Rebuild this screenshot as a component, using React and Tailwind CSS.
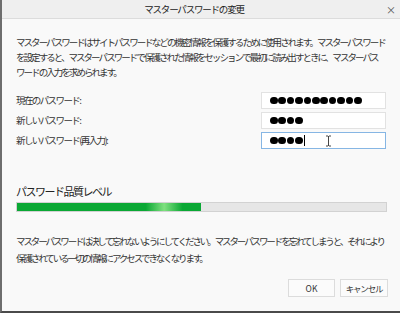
import React from "react";

const font = { fontFamily: '"Noto Sans CJK JP", "Noto Sans", sans-serif' };

function Dots({ n }) {
  return (
    <div className="flex items-center gap-[0.8px]">
      {Array.from({ length: n }).map((_, i) => (
        <div key={i} className="w-[7.6px] h-[7.6px] rounded-full bg-black" />
      ))}
    </div>
  );
}

export default function App() {
  return (
    <div
      className="w-[400px] h-[313px] bg-[#f9f9f9] flex flex-col border-l-2 border-b-2 border-l-[#6e6e6e] border-b-[#4a4a4a] text-[#333] overflow-hidden"
      style={font}
    >
      <div className="h-[19px] shrink-0 bg-[#efefef] border-b border-[#dcdcdc] flex items-center relative">
        <div className="flex-1 text-center text-[9.5px] tracking-[-1.2px] pr-[14px] text-[#222]">
          マスターパスワードの変更
        </div>
        <div className="absolute right-[4px] top-[2px] text-[10px] text-[#555]">×</div>
      </div>

      <div className="flex flex-col pl-[14px] pr-[12px]">
        <div className="mt-[16px] text-[9.5px] tracking-[-1.95px] leading-[15px] whitespace-nowrap">
          <div>マスターパスワードはサイトパスワードなどの機密情報を保護するために使用されます。マスターパスワード</div>
          <div>を設定すると、マスターパスワードで保護された情報をセッションで最初に読み出すときに、マスターパス</div>
          <div>ワードの入力を求められます。</div>
        </div>

        <div className="mt-[12px] flex flex-col gap-[3px]">
          <div className="flex items-center justify-between">
            <div className="text-[9.5px] tracking-[-1.6px]">現在のパスワード:</div>
            <div className="w-[125px] h-[17px] bg-white border border-[#e2e2e2] flex items-center pl-[8px] mr-[2px]">
              <Dots n={11} />
            </div>
          </div>
          <div className="flex items-center justify-between">
            <div className="text-[9.5px] tracking-[-1.6px]">新しいパスワード:</div>
            <div className="w-[125px] h-[17px] bg-white border border-[#e2e2e2] flex items-center pl-[8px] mr-[2px]">
              <Dots n={4} />
            </div>
          </div>
          <div className="flex items-center justify-between">
            <div className="text-[9.5px] tracking-[-1.6px]">新しいパスワード(再入力):</div>
            <div className="w-[125px] h-[17px] bg-white border border-[#86b6e4] flex items-center pl-[8px] mr-[2px] relative">
              <Dots n={4} />
              <div className="w-[1px] h-[11px] bg-black ml-[1px]" />
              <svg className="absolute left-[63px] top-[2px]" width="7" height="12" viewBox="0 0 7 12">
                <path d="M1 1h2M4 1h2M3.5 1v10M1 11h2M4 11h2" stroke="#444" strokeWidth="1" fill="none" />
              </svg>
            </div>
          </div>
        </div>

        <div className="mt-[35px] text-[11px] tracking-[-1.5px] leading-[14px] text-[#222]">
          パスワード品質レベル
        </div>
        <div className="mt-[4px] w-[371px] h-[10px] bg-[#e6e6e6] border border-[#d2d2d2] flex">
          <div className="w-[184px] h-full bg-[linear-gradient(90deg,#0aa834_0%,#0aa834_70%,#7fe07f_80%,#0aa834_90%,#0aa834_100%)]" />
        </div>

        <div className="mt-[21px] text-[9.5px] tracking-[-2.1px] leading-[17px] whitespace-nowrap">
          <div>マスターパスワードは決して忘れないようにしてください。マスターパスワードを忘れてしまうと、それにより</div>
          <div>保護されている一切の情報にアクセスできなくなります。</div>
        </div>

        <div className="mt-[12px] flex justify-end gap-[5px]">
          <div className="w-[47px] h-[18px] bg-[#fbfbfb] border border-[#dcdcdc] flex items-center justify-center text-[8.5px]">
            OK
          </div>
          <div className="w-[48px] h-[18px] bg-[#fbfbfb] border border-[#dcdcdc] flex items-center justify-center text-[8.5px] tracking-[-1.2px]">
            キャンセル
          </div>
        </div>
      </div>
    </div>
  );
}
